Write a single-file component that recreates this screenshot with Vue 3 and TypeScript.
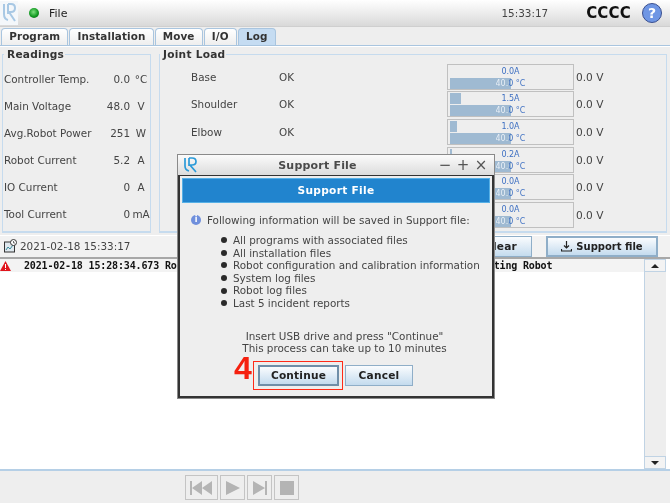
<script setup lang="ts">
const tabs = ['Program', 'Installation', 'Move', 'I/O', 'Log']
const readings = [
  { label: 'Controller Temp.', value: '0.0', unit: '°C' },
  { label: 'Main Voltage', value: '48.0', unit: 'V' },
  { label: 'Avg.Robot Power', value: '251', unit: 'W' },
  { label: 'Robot Current', value: '5.2', unit: 'A' },
  { label: 'IO Current', value: '0', unit: 'A' },
  { label: 'Tool Current', value: '0', unit: 'mA' },
]
const joints = [
  { name: 'Base', current: '0.0A', load: 0 },
  { name: 'Shoulder', current: '1.5A', load: 11 },
  { name: 'Elbow', current: '1.0A', load: 7 },
  { name: 'Wrist 1', current: '0.2A', load: 2 },
  { name: 'Wrist 2', current: '0.0A', load: 0 },
  { name: 'Wrist 3', current: '0.0A', load: 0 },
]
const items = [
  'All programs with associated files',
  'All installation files',
  'Robot configuration and calibration information',
  'System log files',
  'Robot log files',
  'Last 5 incident reports',
]
</script>

<template>
  <div class="page">
    <header class="top">
      <svg class="logo" width="18" height="24" viewBox="0 0 18 24">
        <rect width="18" height="24" fill="#f4f7fa" />
        <path d="M4 3v10q0 5 4 6M8 3v10M8 3h3q4 0 4 4t-4 4H9l6 9" fill="none" stroke="#a8c8e4" stroke-width="2" />
      </svg>
      <span class="led"></span>
      <span class="file">File</span>
      <span class="time">15:33:17</span>
      <span class="name">CCCC</span>
      <span class="help">?</span>
    </header>

    <nav class="tabs">
      <span v-for="t in tabs" :key="t" class="tab" :class="{ active: t === 'Log' }">{{ t }}</span>
    </nav>

    <main class="pane">
      <div class="upper">
        <fieldset class="group readings">
          <legend>Readings</legend>
          <div v-for="r in readings" :key="r.label" class="reading">
            <span class="r-label">{{ r.label }}</span>
            <span class="r-value">{{ r.value }}</span>
            <span class="r-unit">{{ r.unit }}</span>
          </div>
        </fieldset>
        <fieldset class="group joints">
          <legend>Joint Load</legend>
          <div v-for="j in joints" :key="j.name" class="joint">
            <span class="j-name">{{ j.name }}</span>
            <span class="j-state">OK</span>
            <div class="meter">
              <div class="m-line">
                <i class="m-bar" :style="{ width: j.load + 'px' }"></i>
                <span class="m-text">{{ j.current }}</span>
              </div>
              <div class="m-line">
                <i class="m-bar temp"></i>
                <span class="m-text split">40.0 °C</span>
              </div>
            </div>
            <span class="j-volt">0.0 V</span>
          </div>
        </fieldset>
      </div>

      <div class="toolbar">
        <svg width="13" height="14" viewBox="0 0 13 14">
          <rect x="0.5" y="3" width="10" height="10" fill="#dfe8ee" stroke="#333" />
          <path d="M2 11l2-3 2 2 3-4" fill="none" stroke="#3a8a9a" />
          <circle cx="9.5" cy="3.5" r="3" fill="#fff" stroke="#333" />
          <path d="M9.5 2v2h1.5" fill="none" stroke="#333" stroke-width="0.7" />
        </svg>
        <span class="stamp">2021-02-18 15:33:17</span>
        <button class="btn clear">Clear</button>
        <button class="btn support">
          <svg width="11" height="11" viewBox="0 0 11 11">
            <path d="M5.500 0v7M3 4.500l2.500 2.500 2.500-2.500M0.500 8v2h10V8" fill="none" stroke="#222" stroke-width="1.200" />
          </svg>
          Support file
        </button>
      </div>

      <div class="log">
        <div class="log-list">
          <div class="log-row">
            <svg class="warn" width="11" height="10" viewBox="0 0 11 10">
              <path d="M5.500 0L11 10H0z" fill="#e0141c" />
              <path d="M5 3h1v4H5zM5 8h1v1H5z" fill="#fff" />
            </svg>
            <span>2021-02-18 15:28:34.673 Robot Controller C0: Support file service started: Rebooting Robot</span>
          </div>
        </div>
        <div class="scroll">
          <span class="sc-btn"><i class="up"></i></span>
          <span class="sc-track"></span>
          <span class="sc-btn"><i class="down"></i></span>
        </div>
      </div>
    </main>

    <footer class="player">
      <span class="p-btn wide">
        <svg width="24" height="14" viewBox="0 0 24 14"><path d="M0 0h2v14H0zM2 7l10-7v14zM12 7l10-7v14z" fill="#b4b4b4" /></svg>
      </span>
      <span class="p-btn">
        <svg width="14" height="14" viewBox="0 0 14 14"><path d="M0 0l14 7L0 14z" fill="#b4b4b4" /></svg>
      </span>
      <span class="p-btn">
        <svg width="14" height="14" viewBox="0 0 14 14"><path d="M0 0l12 7L0 14zM12 0h2v14h-2z" fill="#b4b4b4" /></svg>
      </span>
      <span class="p-btn">
        <svg width="14" height="14" viewBox="0 0 14 14"><path d="M0 0h14v14H0z" fill="#b4b4b4" /></svg>
      </span>
    </footer>

    <section class="dialog">
      <div class="d-title">
        <svg width="16" height="16" viewBox="0 0 16 16">
          <path d="M2 1v8q0 4 4 5M6 1v8M6 1h3q4 0 4 3.500T9 8H7l6 7" fill="none" stroke="#2b9ad8" stroke-width="1.700" />
        </svg>
        <span class="d-caption">Support File</span>
        <span class="d-ctl">−</span>
        <span class="d-ctl">+</span>
        <span class="d-ctl">×</span>
      </div>
      <div class="d-body">
        <div class="d-banner">Support File</div>
        <div class="d-intro">
          <span class="info">i</span>
          <span>Following information will be saved in Support file:</span>
        </div>
        <ul class="d-list">
          <li v-for="i in items" :key="i">{{ i }}</li>
        </ul>
        <p class="d-note">Insert USB drive and press "Continue"<br />This process can take up to 10 minutes</p>
        <div class="d-actions">
          <span class="step">4</span>
          <span class="mark">
            <button class="btn go">Continue</button>
          </span>
          <button class="btn cancel">Cancel</button>
        </div>
      </div>
    </section>
  </div>
</template>

<style>
body { margin: 0; }
</style>

<style scoped>
.page {
  position: relative;
  width: 670px;
  height: 503px;
  overflow: hidden;
  display: flex;
  flex-direction: column;
  background: #eeeeee;
  color: #444;
  font: 10.4px "DejaVu Sans", sans-serif;
  filter: blur(0.3px);
}
.top {
  height: 26px;
  flex: none;
  display: flex;
  align-items: center;
  background: linear-gradient(#ffffff, #d9d9d9);
  border-bottom: 1px solid #cfcfcf;
}
.logo { flex: none; }
.led {
  width: 10px;
  height: 10px;
  margin-left: 11px;
  border-radius: 50%;
  background: radial-gradient(circle at 45% 40%, #7fe07f, #129a22 55%, #0b4d14);
}
.file { margin-left: 10px; font-weight: 500; color: #222; font-size: 11px; }
.time { margin-left: auto; color: #444; }
.name { margin-left: 38px; font-weight: 700; font-size: 15px; color: #111; letter-spacing: 0.2px; }
.help {
  width: 18px;
  height: 18px;
  margin: 0 8px 0 11px;
  border: 1px solid #3a4f8f;
  border-radius: 50%;
  background: #6f96e4;
  color: #fff;
  font-weight: 700;
  font-size: 14px;
  line-height: 18px;
  text-align: center;
}
.tabs {
  height: 17px;
  flex: none;
  margin-top: 1px;
  padding-left: 1px;
  display: flex;
  gap: 1px;
  box-sizing: border-box;
}
.tab {
  padding: 0 7.2px;
  background: linear-gradient(#fff, #eee);
  border: 1px solid #a9c5df;
  border-bottom: 0;
  border-radius: 4px 4px 0 0;
  font-weight: 700;
  font-size: 10.4px;
  line-height: 14px;
  letter-spacing: 0.1px;
  color: #333;
}
.tab.active { background: #c5dcf2; }
.pane {
  flex: 1;
  min-height: 0;
  display: flex;
  flex-direction: column;
  border-top: 1px solid #a9c5df;
  border-bottom: 2px solid #b5cfe6;
  box-shadow: inset 0 1px 0 #fff;
}
.upper {
  height: 189px;
  flex: none;
  display: flex;
  gap: 8px;
  padding: 0 3px 0 2px;
}
.group {
  margin: 0;
  padding: 0;
  min-width: 0;
  border: 1px solid #c6dbee;
  border-bottom-width: 2px;
  box-sizing: border-box;
  height: 185px;
  margin-top: 2px;
}
.group legend {
  margin-left: 0;
  padding: 0 1px 0 3px;
  font-weight: 700;
  font-size: 10.6px;
  line-height: 13px;
  letter-spacing: 0.25px;
  color: #333;
}
.readings { width: 149px; padding: 4px 0 0 1px; }
.reading { height: 27px; display: flex; align-items: center; }
.r-label { flex: 1; white-space: nowrap; }
.r-value { margin-right: 2px; }
.r-unit { width: 18px; text-align: center; }
.joints { flex: 1; padding: 2px 0 0 0; }
.joint { height: 27.6px; display: flex; align-items: center; margin-left: 31px; }
.j-name { width: 88px; }
.j-state { width: 168px; }
.meter {
  width: 127px;
  height: 26px;
  box-sizing: border-box;
  padding: 1px;
  border: 1px solid #c0c0c0;
  display: flex;
  flex-direction: column;
  gap: 1px;
}
.m-line {
  position: relative;
  height: 11px;
  text-align: center;
  font-size: 8px;
  line-height: 11px;
  color: #3d6fc2;
}
.m-bar {
  position: absolute;
  left: 1px;
  top: 0;
  bottom: 0;
  background: #9fbad2;
}
.m-bar.temp { width: 61px; }
.m-text { position: relative; }
.m-text.split {
  background: linear-gradient(to right, #eef3f8 0 13px, #3d6fc2 13px);
  -webkit-background-clip: text;
  background-clip: text;
  color: transparent;
}
.j-volt { margin-left: 2px; white-space: nowrap; font-size: 10.6px; }
.toolbar {
  height: 24px;
  flex: none;
  display: flex;
  align-items: center;
  padding: 0 12px 0 4px;
  border-bottom: 2px solid #a8a8a8;
  box-sizing: border-box;
  background: #f2f2f2;
  box-shadow: inset 0 1px 0 #fff;
}
.stamp { margin-left: 3px; color: #444; }
.btn {
  box-sizing: border-box;
  font: 700 10.6px "DejaVu Sans", sans-serif;
  letter-spacing: 0.2px;
  color: #222;
  border: 1px solid #8faec8;
  background: linear-gradient(#fafcfe, #c4dbee);
  padding: 0;
}
.clear { margin-left: auto; width: 62px; height: 21px; }
.support {
  width: 112px;
  height: 21px;
  margin-left: 14px;
  border-width: 2px;
  display: flex;
  align-items: center;
  justify-content: center;
  gap: 4px;
  font-size: 10px;
  letter-spacing: 0;
}
.log { flex: 1; min-height: 0; display: flex; background: #fff; }
.log-list { flex: 1; min-width: 0; overflow: hidden; }
.log-row {
  height: 13px;
  display: flex;
  align-items: center;
  background: #f3f3f3;
  font: 700 10px "DejaVu Sans Mono", monospace;
  letter-spacing: -0.15px;
  color: #111;
  white-space: nowrap;
}
.warn { flex: none; margin: 0 13px 0 0; }
.scroll {
  width: 21px;
  margin-right: 4px;
  flex: none;
  display: flex;
  flex-direction: column;
  border-left: 1px solid #c0d3e4;
  background: #eee;
}
.sc-btn {
  height: 13px;
  flex: none;
  display: flex;
  align-items: center;
  justify-content: center;
  border: 1px solid #c0d3e4;
  border-left: 0;
  box-sizing: border-box;
  background: #f3f3f3;
}
.sc-track { flex: 1; }
.up, .down { width: 0; height: 0; border: 4px solid transparent; }
.up { border-bottom-color: #222; border-top-width: 0; }
.down { border-top-color: #222; border-bottom-width: 0; }
.player {
  height: 32px;
  flex: none;
  display: flex;
  gap: 2px;
  padding: 4px 0 0 185px;
  box-sizing: border-box;
}
.p-btn {
  width: 25px;
  height: 25px;
  display: flex;
  align-items: center;
  justify-content: center;
  box-sizing: border-box;
  border: 1px solid #c4c4c4;
}
.p-btn.wide { width: 33px; }
.dialog {
  position: absolute;
  left: 177px;
  top: 154px;
  width: 318px;
  height: 245px;
  box-sizing: border-box;
  display: flex;
  flex-direction: column;
  border: 1px solid #8a8a8a;
  background: #eee;
}
.d-title {
  height: 20px;
  flex: none;
  display: flex;
  align-items: center;
  padding: 0 4px 0 5px;
  background: linear-gradient(#fbfbfb, #dcdcdc);
}
.d-caption {
  flex: 1;
  text-align: center;
  font-weight: 700;
  font-size: 11px;
  letter-spacing: 0.2px;
  color: #4a4a4a;
}
.d-ctl { width: 18px; text-align: center; font-size: 15px; line-height: 16px; color: #555; }
.d-body {
  flex: 1;
  display: flex;
  flex-direction: column;
  border: 1px solid #333;
  border-width: 1px 2px 2px;
  padding: 2px 2px 0;
}
.d-banner {
  height: 25px;
  flex: none;
  box-sizing: border-box;
  border: 1px solid #56b0e6;
  background: #2184ce;
  color: #fff;
  font-weight: 700;
  font-size: 10.6px;
  letter-spacing: 0.3px;
  line-height: 23px;
  text-align: center;
}
.d-intro {
  margin: 10px 0 0 9px;
  display: flex;
  align-items: center;
  gap: 6px;
  height: 14px;
}
.info {
  width: 10px;
  height: 10px;
  border-radius: 50%;
  background: #6f8fdc;
  color: #fff;
  font: 700 8px/10px "DejaVu Sans", sans-serif;
  text-align: center;
}
.d-list {
  margin: 7px 0 0;
  padding: 0 0 0 39px;
  list-style: none;
  line-height: 12.6px;
  white-space: nowrap;
}
.d-list li { display: flex; align-items: center; gap: 6px; }
.d-list li::before {
  content: "";
  width: 6px;
  height: 6px;
  border-radius: 50%;
  background: #2a2a2a;
}
.d-note {
  margin: 20px 0 0;
  text-align: center;
  line-height: 12.6px;
  padding-left: 17px;
}
.d-actions {
  position: relative;
  margin: 6px 0 0 71px;
  display: flex;
  align-items: center;
  gap: 2px;
}
.step {
  position: absolute;
  left: -19px;
  top: -8px;
  font: 700 32px/30px "Liberation Sans", sans-serif;
  color: #f5200f;
}
.mark {
  padding: 3px 3px 3px 4px;
  border: 1px solid #ff2a18;
  display: flex;
}
.go { width: 81px; height: 21px; border: 2px solid #6f8ea8; }
.cancel { width: 68px; height: 21px; }
</style>
